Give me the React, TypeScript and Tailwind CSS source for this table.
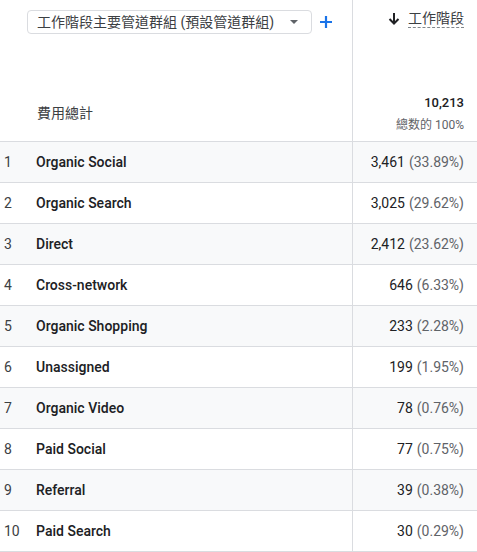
const rows = [
  { name: "Organic Social", value: "3,461", pct: "(33.89%)" },
  { name: "Organic Search", value: "3,025", pct: "(29.62%)" },
  { name: "Direct", value: "2,412", pct: "(23.62%)" },
  { name: "Cross-network", value: "646", pct: "(6.33%)" },
  { name: "Organic Shopping", value: "233", pct: "(2.28%)" },
  { name: "Unassigned", value: "199", pct: "(1.95%)" },
  { name: "Organic Video", value: "78", pct: "(0.76%)" },
  { name: "Paid Social", value: "77", pct: "(0.75%)" },
  { name: "Referral", value: "39", pct: "(0.38%)" },
  { name: "Paid Search", value: "30", pct: "(0.29%)" },
];

const App = () => {
  return (
    <div
      className="w-[477px] h-[552px] overflow-hidden bg-white text-[#202124]"
      style={{ fontFamily: 'Roboto, "Noto Sans CJK TC", sans-serif' }}
    >
      {/* Header */}
      <div className="grid grid-cols-[352px_125px] h-[142px] border-b border-[#dadce0]">
        <div className="flex flex-col justify-between pl-[27px] pt-[10px] pb-[17px]">
          <div className="flex items-center gap-[7px]">
            <div className="flex items-center h-[24px] w-[285px] border border-[#dadce0] rounded-[4px] pl-[9px] pr-[13px] text-[14px] text-[#3c4043]">
              <span className="flex-1 whitespace-nowrap leading-none">
                工作階段主要管道群組 (預設管道群組)
              </span>
              <svg width="8" height="4" viewBox="0 0 8 4">
                <path d="M0 0 L8 0 L4 4 Z" fill="#5f6368" />
              </svg>
            </div>
            <svg width="14" height="14" viewBox="0 0 14 14">
              <path d="M7 1 V13 M1 7 H13" stroke="#1a73e8" strokeWidth="2.2" />
            </svg>
          </div>
          <div className="pl-[10px] text-[14px] text-[#3c4043]">費用總計</div>
        </div>
        <div className="border-l border-[#dadce0] flex flex-col justify-between items-end pr-[13px] pt-[9px] pb-[6px]">
          <div className="flex items-center gap-[8px]">
            <svg width="12" height="13" viewBox="0 0 12 13">
              <path d="M6 1 V11.5 M1.5 7 L6 11.5 L10.5 7" stroke="#202124" strokeWidth="2" fill="none" />
            </svg>
            <span className="text-[14px] text-[#3c4043] border-b border-dashed border-[#80868b] leading-[18px]">
              工作階段
            </span>
          </div>
          <div className="flex flex-col items-end">
            <div
              className="text-[13px] leading-[18px]"
              style={{ fontFamily: '"Roboto Medium", Roboto, sans-serif', fontWeight: 500 }}
            >
              10,213
            </div>
            <div className="text-[12px] text-[#5f6368] leading-[20px] mt-[3px]">總数的 100%</div>
          </div>
        </div>
      </div>

      {/* Rows */}
      {rows.map((r, i) => (
        <div
          key={r.name}
          className={`grid grid-cols-[352px_125px] h-[41px] border-b border-[#dadce0] text-[14px] ${
            i % 2 === 0 ? "bg-[#f8f9fa]" : "bg-white"
          }`}
        >
          <div className="flex items-center">
            <span className="w-[36px] pl-[4px] text-[#3c4043]">{i + 1}</span>
            <span
              className="text-[#202124]"
              style={{ fontFamily: '"Roboto Medium", Roboto, sans-serif', fontWeight: 500 }}
            >
              {r.name}
            </span>
          </div>
          <div className="border-l border-[#dadce0] flex items-center justify-end pr-[13px] whitespace-nowrap">
            <span className="text-[#202124]">{r.value}</span>
            <span className="text-[#5f6368] ml-[4px]">{r.pct}</span>
          </div>
        </div>
      ))}
    </div>
  );
};

export default App;
